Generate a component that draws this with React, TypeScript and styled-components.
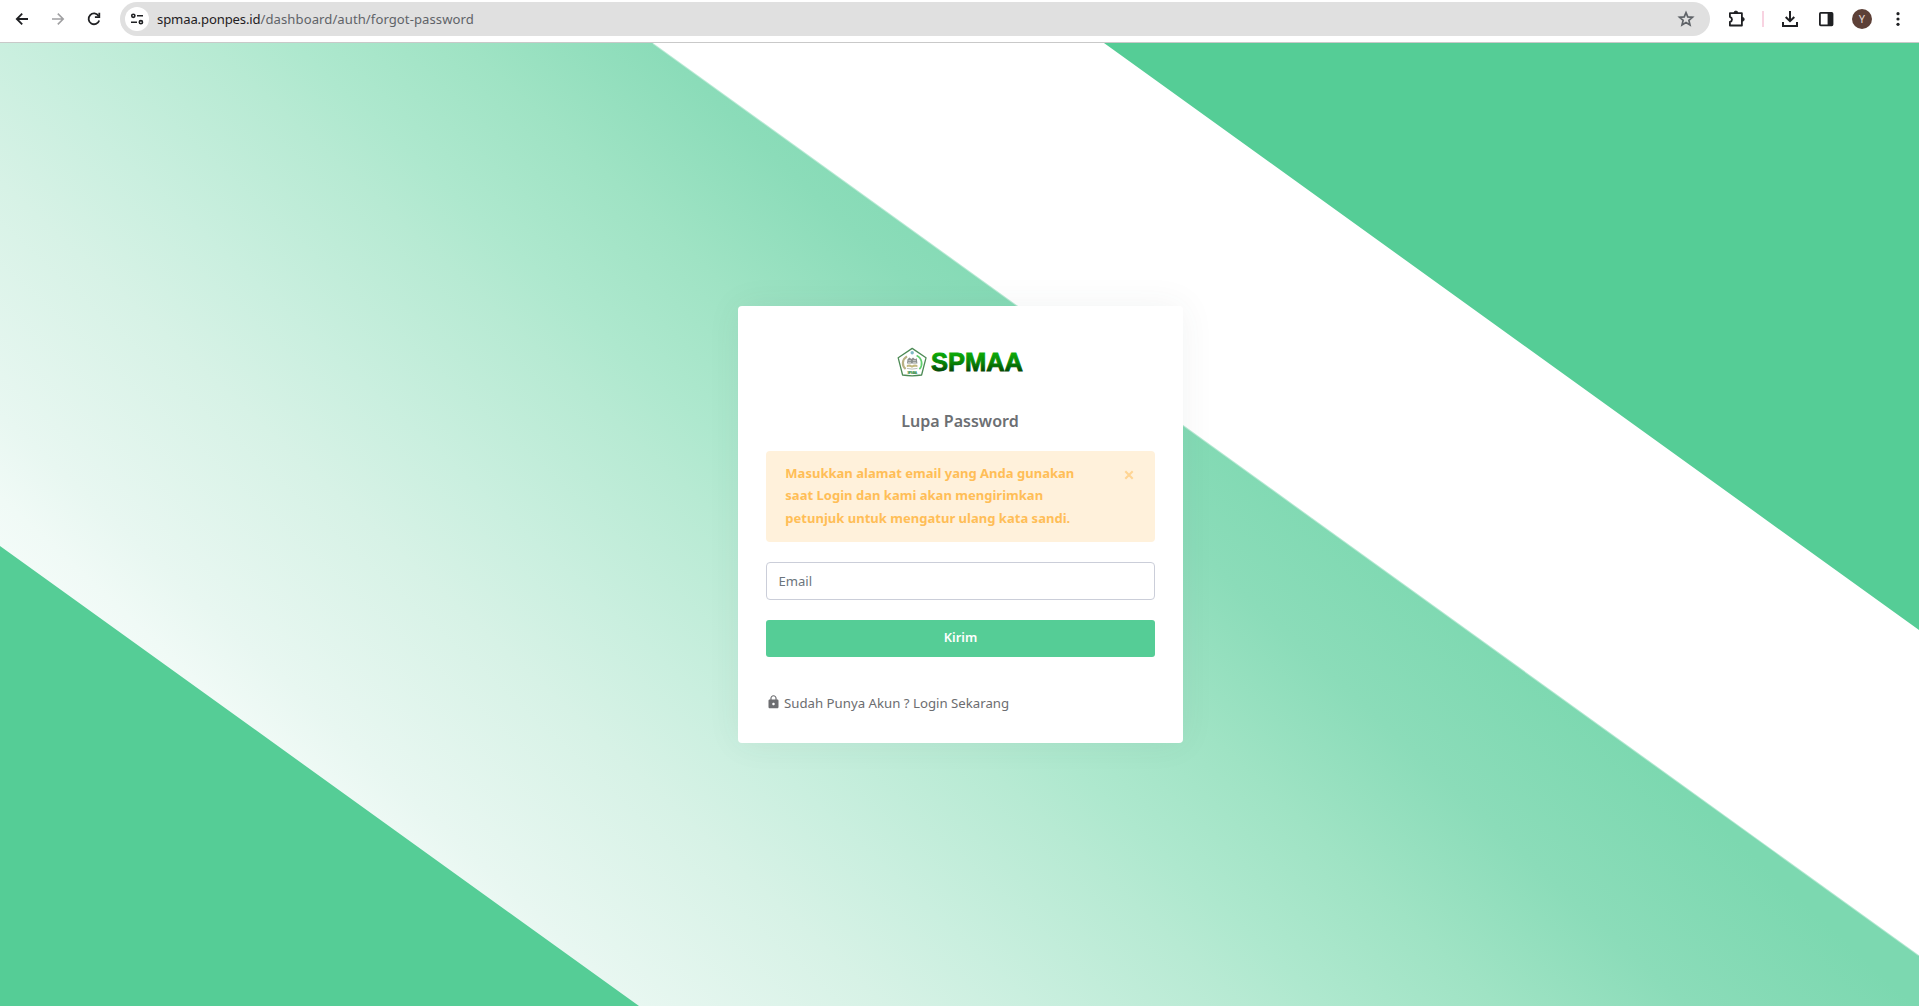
import React from "react";
import styled, { createGlobalStyle } from "styled-components";
import { MdLock } from "react-icons/md";

const GREEN = "#55cd96";
const INK = "#1f2023";

const GlobalStyle = createGlobalStyle`
  *, *::before, *::after { box-sizing: border-box; }
  body {
    margin: 0;
    background: #fff;
    overflow: hidden;
    font-family: "Noto Sans", "Open Sans", sans-serif;
  }
  button, input { font-family: inherit; }
`;

const Window = styled.div`
  display: flex;
  flex-direction: column;
  height: 100vh;
`;

/* ---------- Browser toolbar ---------- */

const Toolbar = styled.header`
  display: flex;
  flex: none;
  height: 43px;
  padding: 2px 3px 0 4px;
  background: #fff;
  border-bottom: 1px solid #c9c9c9;
`;

const ToolGroup = styled.div`
  display: flex;
  height: 34px;
`;

const ToolButton = styled.button<{ $color?: string }>`
  display: flex;
  align-items: center;
  justify-content: center;
  width: 36px;
  height: 34px;
  padding: 0;
  border: 0;
  background: none;
  color: ${(p) => p.$color ?? INK};
`;

const AddressBar = styled.div`
  display: flex;
  flex: 1;
  align-items: center;
  height: 34px;
  margin: 0 8px;
  padding: 0 14px 0 5px;
  border-radius: 17px;
  background: #e0e0e0;
`;

const SiteInfo = styled.span`
  display: flex;
  align-items: center;
  justify-content: center;
  width: 24px;
  height: 24px;
  margin-right: 8px;
  border-radius: 50%;
  background: #fff;
`;

const Url = styled.span`
  flex: 1;
  font-size: 13.1px;
  line-height: 20px;
  letter-spacing: 0.07px;
  color: #5f6368;
`;

const Host = styled.span`
  letter-spacing: -0.13px;
  color: ${INK};
`;

const Divider = styled.span`
  width: 2px;
  height: 16px;
  margin: 9px 8px;
  background: #f8d3e1;
`;

const Avatar = styled.span`
  display: flex;
  align-items: center;
  justify-content: center;
  width: 20px;
  height: 20px;
  border-radius: 50%;
  background: #5d4037;
  color: #e4dcd9;
  font-family: Roboto, sans-serif;
  font-size: 10.5px;
`;

/* ---------- Page ---------- */

const Page = styled.main`
  position: relative;
  display: flex;
  flex: 1;
  align-items: center;
  justify-content: center;
  padding-left: 2px;
`;

const Backdrop = styled.svg`
  position: absolute;
  inset: 0;
  width: 100%;
  height: 100%;
`;

const Card = styled.section`
  position: relative;
  display: flex;
  flex-direction: column;
  width: 445px;
  height: 437px;
  padding: 28px;
  border-radius: 4px;
  background: #fff;
  box-shadow: 0 0 35px rgba(60, 70, 80, 0.065);
`;

const LogoRow = styled.div`
  display: flex;
  align-items: center;
  justify-content: center;
  height: 56px;
  padding-right: 2px;
`;

const Title = styled.h1`
  margin: 16px 0 15px;
  padding-right: 1px;
  font-size: 16.05px;
  font-weight: 600;
  line-height: 30px;
  text-align: center;
  color: #6c6f73;
`;

const Alert = styled.div`
  display: flex;
  justify-content: space-between;
  height: 91px;
  padding: 10.75px 21px 0 19.3px;
  border-radius: 4px;
  background: #fff1db;
  color: #ffbe57;
  font-size: 13.04px;
  font-weight: 700;
  line-height: 22.5px;
`;

const AlertText = styled.p`
  width: 300px;
  margin: 0;
`;

const Close = styled.button`
  display: flex;
  width: 10px;
  height: 10px;
  margin-top: 8px;
  padding: 0;
  border: 0;
  background: none;
  color: #ffd594;
`;

const EmailInput = styled.input`
  width: 100%;
  height: 38px;
  margin: 20px 0;
  padding: 0 11.4px;
  border: 1px solid #cbced9;
  border-radius: 4px;
  background: #fff;
  font-size: 13.1px;
  &::placeholder {
    color: #6c757d;
    opacity: 1;
  }
`;

const Submit = styled.button`
  height: 37px;
  padding: 0 0 4px;
  border: 0;
  border-radius: 3px;
  background: ${GREEN};
  color: #fff;
  font-size: 12.8px;
  font-weight: 600;
`;

const LoginLink = styled.a`
  display: flex;
  align-items: center;
  gap: 3px;
  height: 22px;
  margin-top: 35px;
  color: #6c6d70;
  font-size: 13.22px;
  line-height: 22px;
`;

const LockIcon = styled(MdLock)`
  width: 15px;
  height: 16px;
  margin-top: -3px;
`;

/* ---------- Drawings ---------- */

const BackIcon = () => (
  <svg width="16" height="16" fill="none" stroke="currentColor" strokeWidth="1.8">
    <path d="M14 8H3.4M8.2 2.6 2.8 8l5.4 5.4" />
  </svg>
);

const ForwardIcon = () => (
  <svg width="16" height="16" fill="none" stroke="currentColor" strokeWidth="1.6">
    <path d="M2 8h10.6M7.8 2.6 13.2 8l-5.4 5.4" />
  </svg>
);

const ReloadIcon = () => (
  <svg width="16" height="16" fill="none" stroke="currentColor" strokeWidth="1.8">
    <path d="M12.6 4.9A5.4 5.4 0 1 0 13.2 9.4" />
    <path d="M13.3 1.8v4.3H8.9" />
  </svg>
);

const TuneIcon = () => (
  <svg width="14" height="14" fill="none" stroke={INK} strokeWidth="1.6">
    <circle cx="3.3" cy="3.8" r="1.6" />
    <path d="M7 3.8h6M1 10.2h6" />
    <circle cx="10.9" cy="10.2" r="1.6" />
  </svg>
);

const StarIcon = () => (
  <svg width="20" height="20" fill="none" stroke="#5f6368" strokeWidth="1.7">
    <path d="m10 3.6 1.8 4.3 4.7.4-3.6 3.1 1.1 4.6-4-2.5-4 2.5 1.1-4.6-3.6-3.1 4.7-.4z" />
  </svg>
);

const PuzzleIcon = () => (
  <svg width="20" height="20" fill="none" stroke="currentColor" strokeWidth="1.8" strokeLinejoin="round">
    <path d="M3.9 4.2h12v12.3h-12v-3.6c2.8-.9 2.8-4.1 0-5z" />
    <path d="M8 4a1.9 1.9 0 0 1 3.8 0zM16.3 8.4a1.9 1.9 0 0 1 0 3.8z" fill="currentColor" strokeWidth="1" />
  </svg>
);

const DownloadIcon = () => (
  <svg width="18" height="18" fill="none" stroke="currentColor" strokeWidth="2">
    <path d="M9 1v10M4.7 7 9 11.2 13.3 7M2 12v4h14v-4" />
  </svg>
);

const PanelIcon = () => (
  <svg width="16" height="16">
    <rect x="1.9" y="1.9" width="12.6" height="12.4" rx=".8" fill="none" stroke="currentColor" strokeWidth="1.8" />
    <path d="M9.6 2h4.9v12.3H9.6z" fill="currentColor" />
  </svg>
);

const MenuIcon = () => (
  <svg width="4" height="18" fill="currentColor">
    <circle cx="2" cy="3.7" r="1.6" />
    <circle cx="2" cy="9" r="1.6" />
    <circle cx="2" cy="14.3" r="1.6" />
  </svg>
);

const CloseIcon = () => (
  <svg width="10" height="10" fill="none" stroke="currentColor" strokeWidth="2.1">
    <path d="m1.3 1.3 7.4 7.4M8.7 1.3 1.3 8.7" />
  </svg>
);

const Logo = () => (
  <svg width="128" height="32" viewBox="0 0 128 32">
    <defs>
      <linearGradient id="wordmark" x1="0" y1="7" x2="0" y2="27" gradientUnits="userSpaceOnUse">
        <stop offset="0" stopColor="#0cab08" />
        <stop offset=".5" stopColor="#078206" />
        <stop offset="1" stopColor="#033c03" />
      </linearGradient>
    </defs>
    <path d="M16.2 2.4 30 11.8 25.6 29 Q16 30.6 6.6 29L2.2 11.8z" fill="#fff" stroke="#4c8a55" strokeWidth="1.3" strokeLinejoin="round" />
    <circle cx="16.2" cy="6.8" r="1.7" fill="#7fb9c4" />
    <path d="M11 10.4c-5.2 3.2-5.2 9.4-1.4 12.6" fill="none" stroke="#b9b184" strokeWidth="2.2" />
    <path d="M20.6 9.6c5.6 2.8 6.6 9.4 2.8 13.6" fill="none" stroke="#5fcf6c" strokeWidth="1.7" />
    <path d="M11.5 13.2 13.4 11.6l2 1.5 1.6-1.5 2 1.6 1.8-1 .6 5.4H11z" fill="#8b8f8c" />
    <path d="M12.5 14.6h2.4m2 0h3M12 16.4h3m1.8 0h3.4" stroke="#d5d8d5" strokeWidth=".8" />
    <path d="M10.8 19c1.8-.9 3.8-.7 5.2.4 1.6-1.1 3.6-1.2 5.4-.4v2.2c-2-.7-3.8-.6-5.4.5-1.5-1.1-3.3-1.2-5.2-.5z" fill="#c2b880" />
    <path d="M11 22.4q5 1.4 10.4 0" fill="none" stroke="#a9b0a9" strokeWidth=".8" />
    <text x="16.2" y="27.9" fill="#2f8a3d" fontFamily="Liberation Sans, sans-serif" fontWeight="700" fontSize="3.8" textAnchor="middle" textLength="10">SPMAA</text>
    <text x="35" y="25.4" fill="url(#wordmark)" stroke="url(#wordmark)" strokeWidth=".9" fontFamily="Liberation Sans, Arial, sans-serif" fontWeight="700" fontSize="26" textLength="92" lengthAdjust="spacingAndGlyphs">SPMAA</text>
  </svg>
);

const Stripes = () => (
  <Backdrop viewBox="0 43 1919 963" preserveAspectRatio="none" aria-hidden="true">
    <defs>
      <linearGradient id="band" gradientUnits="userSpaceOnUse" x1="327.6" y1="897.5" x2="1010" y2="163.6">
        <stop offset="0" stopColor="#f6fcfa" />
        <stop offset=".07" stopColor="#f0faf6" />
        <stop offset=".13" stopColor="#e8f7f1" />
        <stop offset=".3" stopColor="#d7f2e6" />
        <stop offset=".4" stopColor="#caefdf" />
        <stop offset=".543" stopColor="#b7ead3" />
        <stop offset=".6" stopColor="#aee8ce" />
        <stop offset=".717" stopColor="#9fe3c4" />
        <stop offset=".845" stopColor="#8bdcb9" />
        <stop offset="1" stopColor="#7cd8b0" />
      </linearGradient>
    </defs>
    <rect y="43" width="1919" height="963" fill="#fff" />
    <path d="M0 43H653L1919 955.3V1006H0z" fill="url(#band)" />
    <path d="M653 43 1919 955.3" stroke="#fff" strokeOpacity=".4" strokeWidth="2" />
    <path d="M1104 43H1919V630zM0 546 639 1006H0z" fill={GREEN} />
  </Backdrop>
);

export default function App() {
  return (
    <Window>
      <GlobalStyle />
      <Toolbar>
        <ToolGroup>
          <ToolButton aria-label="Back"><BackIcon /></ToolButton>
          <ToolButton aria-label="Forward" $color="#a0a0a2"><ForwardIcon /></ToolButton>
          <ToolButton aria-label="Reload"><ReloadIcon /></ToolButton>
        </ToolGroup>
        <AddressBar>
          <SiteInfo><TuneIcon /></SiteInfo>
          <Url><Host>spmaa.ponpes.id</Host>/dashboard/auth/forgot-password</Url>
          <StarIcon />
        </AddressBar>
        <ToolGroup>
          <ToolButton aria-label="Extensions"><PuzzleIcon /></ToolButton>
          <Divider />
          <ToolButton aria-label="Downloads"><DownloadIcon /></ToolButton>
          <ToolButton aria-label="Side panel"><PanelIcon /></ToolButton>
          <ToolButton aria-label="Profile"><Avatar>Y</Avatar></ToolButton>
          <ToolButton aria-label="Menu"><MenuIcon /></ToolButton>
        </ToolGroup>
      </Toolbar>
      <Page>
        <Stripes />
        <Card>
          <LogoRow><Logo /></LogoRow>
          <Title>Lupa Password</Title>
          <Alert>
            <AlertText>
              Masukkan alamat email yang Anda gunakan<br />
              saat Login dan kami akan mengirimkan<br />
              petunjuk untuk mengatur ulang kata sandi.
            </AlertText>
            <Close aria-label="Close"><CloseIcon /></Close>
          </Alert>
          <EmailInput placeholder="Email" />
          <Submit>Kirim</Submit>
          <LoginLink>
            <LockIcon />
            Sudah Punya Akun ? Login Sekarang
          </LoginLink>
        </Card>
      </Page>
    </Window>
  );
}
